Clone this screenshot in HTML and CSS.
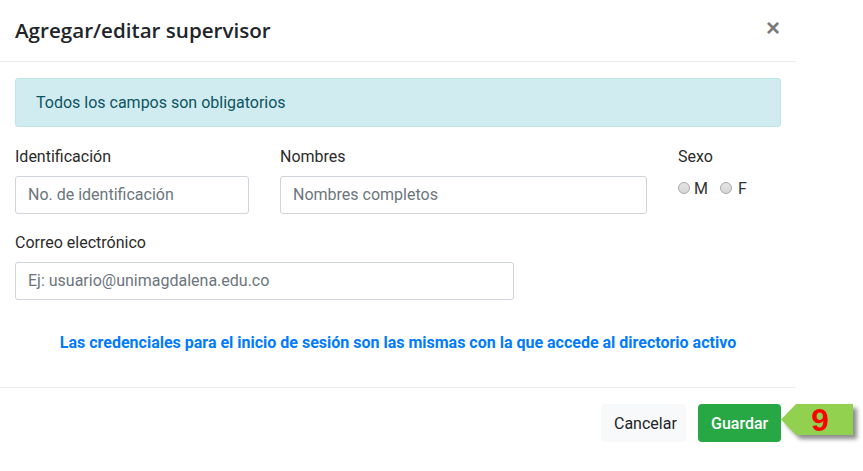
FILE: index.html
```html
<!DOCTYPE html>
<html lang="es">
<head>
<meta charset="utf-8">
<title>Agregar/editar supervisor</title>
<link rel="stylesheet" href="styles.css">
</head>
<body>
<div class="modal">
  <div class="modal-header">
    <h5 class="modal-title">Agregar/editar supervisor</h5>
    <span class="close">×</span>
  </div>
  <div class="modal-body">
    <div class="alert">Todos los campos son obligatorios</div>
    <div class="row">
      <div class="field f-id">
        <label class="label">Identificación</label>
        <div class="input">No. de identificación</div>
      </div>
      <div class="field f-name">
        <label class="label">Nombres</label>
        <div class="input">Nombres completos</div>
      </div>
      <div class="field f-sex">
        <label class="label">Sexo</label>
        <div class="radios">
          <span class="radio"></span><span class="rlabel">M</span>
          <span class="radio r2"></span><span class="rlabel">F</span>
        </div>
      </div>
    </div>
    <div class="field f-mail">
      <label class="label">Correo electrónico</label>
      <div class="input">Ej: usuario@unimagdalena.edu.co</div>
    </div>
    <p class="note">Las credenciales para el inicio de sesión son las mismas con la que accede al directorio activo</p>
  </div>
  <div class="modal-footer">
    <button class="btn btn-light">Cancelar</button>
    <button class="btn btn-success">Guardar</button>
    <div class="callout"><div class="callout-shape"><span class="callout-num">9</span></div></div>
  </div>
</div>
</body>
</html>
```

FILE: styles.css
```css
* { box-sizing: border-box; }
html, body { margin: 0; padding: 0; background: #fff; }
body {
  font-family: Roboto, "Liberation Sans", sans-serif;
  font-size: 16px;
  color: #212529;
  width: 863px;
  height: 471px;
  overflow: hidden;
}
.modal { width: 796px; background: #fff; }
.modal-header {
  display: flex;
  align-items: center;
  justify-content: space-between;
  padding: 16px 15px 16px 15px;
  border-bottom: 1px solid #e9ecef;
  height: 62px;
}
.modal-title {
  margin: 0;
  font-family: "Open Sans", sans-serif;
  font-weight: 600;
  font-size: 20.6px;
  line-height: 29px;
  color: #212529;
}
.close {
  font-family: "Liberation Sans", sans-serif;
  font-size: 24px;
  font-weight: 700;
  line-height: 1;
  color: #7a7a7a;
  margin-right: 1px;
  margin-top: -6px;
}
.modal-body { padding: 16px 15px 16px 15px; }
.alert {
  background: #d1ecf1;
  border: 1px solid #bee5eb;
  color: #0c5460;
  border-radius: 3px;
  padding: 12px 20px;
  line-height: 23px;
  font-size: 16px;
}
.row { display: flex; gap: 31px; margin-top: 16px; }
.field { display: flex; flex-direction: column; }
.f-id { width: 234px; }
.f-name { width: 367px; }
.f-sex { flex: 1; }
.label { line-height: 24px; padding-top: 2px; margin-bottom: 7px; color: #2b2b2b; }
.input {
  height: 38px;
  border: 1px solid #ced4da;
  border-radius: 3px;
  padding: 0 12px;
  line-height: 36px;
  color: #6c757d;
  font-size: 16px;
}
.radios { display: flex; align-items: center; height: 22px; margin-top: 1px; }
.radio {
  width: 12px; height: 12px;
  border-radius: 50%;
  border: 1px solid #a9a9a9;
  background: linear-gradient(#e4e4e4, #d6d6d6);
  margin-right: 4px;
}
.r2 { margin-left: 12px; margin-right: 6px; }
.rlabel { color: #333; font-size: 16px; }
.f-mail { margin-top: 16px; width: 499px; }
.f-mail .label { padding-top: 1px; margin-bottom: 7px; }
.note {
  margin: 32px 0 17px;
  text-align: center;
  color: #007bff;
  font-weight: 700;
  font-size: 16px;
  line-height: 22px;
}
.modal-footer {
  position: relative;
  display: flex;
  justify-content: flex-end;
  gap: 12px;
  border-top: 1px solid #e9ecef;
  padding: 16px 15px;
}
.btn {
  font-family: Roboto, sans-serif;
  font-size: 16px;
  height: 38px;
  border-radius: 4px;
  border: 1px solid transparent;
  padding: 0 12px;
}
.btn-light { background: #f8f9fa; color: #212529; border-color: #f8f9fa; width: 85px; }
.btn-success { background: #28a745; color: #fff; font-weight: 500; width: 83px; }
.callout {
  position: absolute;
  left: 781px;
  top: 16px;
  width: 72px;
  height: 31px;
  filter: drop-shadow(4px 4px 2px rgba(0,0,0,0.45));
}
.callout-shape {
  width: 100%;
  height: 100%;
  background: #92d050;
  clip-path: polygon(0 50%, 15px 0, 100% 0, 100% 100%, 15px 100%);
  display: flex;
  align-items: center;
  justify-content: center;
  padding-left: 6px;
}
.callout-num {
  font-family: "Liberation Sans", sans-serif;
  font-weight: 700;
  font-size: 32px;
  color: #ff0000;
  line-height: 1;
}
```
